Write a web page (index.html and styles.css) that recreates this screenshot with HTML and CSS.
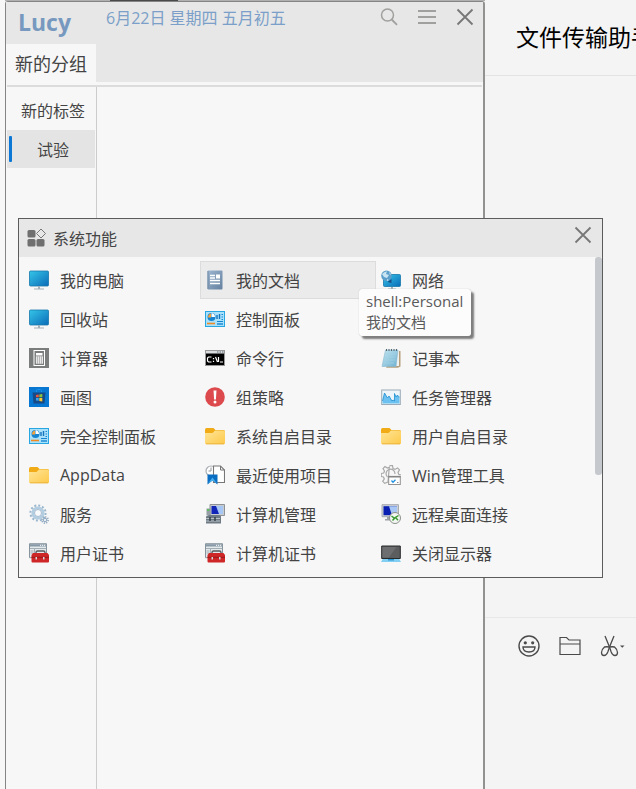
FILE: index.html
```html
<!DOCTYPE html>
<html lang="zh-CN">
<head>
  <meta charset="UTF-8">
  <meta name="viewport" content="width=device-width, initial-scale=1.0">
  <title>Lucy</title>
  <link rel="stylesheet" href="styles.css">
</head>
<body>
  <!-- 图标 -->
  <svg class="sprite" aria-hidden="true">
    <defs>
      <linearGradient id="screenBlue" x1="0" y1="0" x2="1" y2="1">
        <stop offset="0" stop-color="#35c5e8"/>
        <stop offset="1" stop-color="#0a6cb8"/>
      </linearGradient>
      <linearGradient id="folderYellow" x1="0" y1="0" x2="1" y2="1">
        <stop offset="0" stop-color="#ffe597"/>
        <stop offset="1" stop-color="#fdc94a"/>
      </linearGradient>
      <linearGradient id="docBlue" x1="0" y1="0" x2="1" y2="1">
        <stop offset="0" stop-color="#9db6d0"/>
        <stop offset="1" stop-color="#64809f"/>
      </linearGradient>
      <linearGradient id="noteBlue" x1="0" y1="0" x2="1" y2="1">
        <stop offset="0" stop-color="#c4e6f2"/>
        <stop offset="1" stop-color="#6fb1d0"/>
      </linearGradient>
    </defs>
    <symbol id="i-pc" viewBox="0 0 20 20">
      <rect x="0.5" y="1" width="19" height="15" rx="1" fill="url(#screenBlue)" stroke="#1779ab" stroke-width="0.8"/>
      <path d="M9 16h2v2.4h4v1H5v-1h4z" fill="#a3b1ba"/>
    </symbol>
    <symbol id="i-doc" viewBox="0 0 20 20">
      <rect x="2.5" y="0.5" width="15" height="19" rx="1" fill="url(#docBlue)"/>
      <path d="M3 1v18" stroke="#7089a6"/>
      <path d="M5 5.5h5M5 8h5M5 10.5h10M5 13.5h10" stroke="#fff" stroke-width="1.3"/>
      <rect x="11" y="4.5" width="4" height="4" fill="#fff"/>
    </symbol>
    <symbol id="i-net" viewBox="0 0 20 20">
      <rect x="2.500" y="4.5" width="17" height="12" rx="1" fill="url(#screenBlue)" stroke="#1779ab" stroke-width="0.8"/>
      <path d="M10 17h2v1.5h3v1H7v-1h3z" fill="#a3b1ba"/>
      <circle cx="5.5" cy="5.8" r="5.3" fill="#5c9fcb"/>
      <path d="M1 4q3-3 5-2.500L5 4l3 1-2 3-3-1zM8 2l2 2-1 1zM6 9l2 1-2 1z" fill="#c9e4f2"/>
      <path d="M6.500 12l4-3v4z" fill="#1a4e86"/>
    </symbol>
    <symbol id="i-panel" viewBox="0 0 20 20">
      <rect x="0.5" y="2.5" width="19" height="15" fill="#a9e1fb" stroke="#27a6e2"/>
      <circle cx="6.5" cy="8" r="4" fill="#1585d2"/>
      <path d="M6.5 8V4a4 4 0 0 1 3.500 4z" fill="#fff"/>
      <path d="M6 8.5v-4a4 4 0 0 0-3 4z" fill="#f3a13a"/>
      <path d="M12 10V6M14.500 10V5" stroke="#1373bd" stroke-width="1.4"/>
      <path d="M16.500 5.500h1.500M16.500 8h1.500M16.500 10.500h1.500M12 12.500h6" stroke="#1585d2"/>
      <path d="M2 14.500h8" stroke="#f08a24" stroke-width="1.6"/>
      <path d="M12 15h6" stroke="#1585d2" stroke-width="1.4"/>
    </symbol>
    <symbol id="i-calc" viewBox="0 0 20 20">
      <rect width="20" height="20" fill="#7b7d7c"/>
      <rect x="5" y="2.5" width="10.5" height="15" fill="none" stroke="#fff" stroke-width="1"/>
      <rect x="7" y="5" width="6.5" height="2.5" fill="#fff"/>
      <path d="M7.400 8.500v7M9.400 8.500v7M11.400 8.500v7M13.400 8.500v7M7 9h7M7 11h7M7 13h7M7 15h7" stroke="#fff" stroke-width="0.8"/>
    </symbol>
    <symbol id="i-cmd" viewBox="0 0 20 20">
      <rect x="0.5" y="2.5" width="19" height="15" fill="#000" stroke="#999"/>
      <path d="M1 3h18v2.500H1z" fill="#d8dcde"/>
      <path d="M12 4h1.500M14.500 4H16M17 4h1.500" stroke="#5a6670"/>
      <path d="M6.500 9h-3l-1 1v3l1 1h3M8.500 10v1.200M8.500 12.800V14M10.500 9l2 5M13.500 9v5M15 14h3" fill="none" stroke="#fff" stroke-width="1.2"/>
    </symbol>
    <symbol id="i-note" viewBox="0 0 20 20">
      <path d="M16 3h3.500v15.500L17 19.800H5z" fill="#b59f7c"/>
      <path d="M4.500 2.500H18V18H3z" fill="#eef2f2"/>
      <path d="M4.500 2H17l-2 16.500H1z" fill="url(#noteBlue)" stroke="#88b8cd" stroke-width="0.6"/>
      <path d="M5 6h10M4.500 9h10M4 12h10M3 15h10" stroke="#a4d2e4" stroke-width="0.7"/>
      <path d="M5.500 1v2M8 1v2M10.500 1v2M13 1v2M15.500 1v2" stroke="#58636a"/>
    </symbol>
    <symbol id="i-paint" viewBox="0 0 20 20">
      <rect width="20" height="20" fill="#0877d2"/>
      <path d="M7.500 5V3.500q0-1 1-1h3q1 0 1 1V5" fill="none" stroke="#1b91e8"/>
      <path d="M3.500 5.500h13l-1 11h-11z" fill="#174a86"/>
      <path d="M7 8l2.700-.4v2.700H7z" fill="#f0553a"/>
      <path d="M10.300 7.500l3-.5v3.300h-3z" fill="#87c540"/>
      <path d="M7 11h2.700v2.800L7 13.400z" fill="#33a7ed"/>
      <path d="M10.300 11h3v3.400l-3-.5z" fill="#fdc82f"/>
    </symbol>
    <symbol id="i-alert" viewBox="0 0 20 20">
      <circle cx="10" cy="10" r="9.8" fill="#dc4a4d"/>
      <path d="M8.500 3.500h3l-.6 9H9.100z" fill="#fff"/>
      <circle cx="10" cy="15" r="1.5" fill="#fff"/>
    </symbol>
    <symbol id="i-task" viewBox="0 0 20 20">
      <rect x="0.7" y="3" width="18.6" height="14.5" fill="#edf5fb" stroke="#9babb7"/>
      <path d="M1.500 14l2-8 3 5 1.500-2 3 5 1-1 1.500 1V6.500L15 10l1.500-2 1 2h1v6.500h-17z" fill="#6cc1f0"/>
      <path d="M1.500 14l2-8 3 5 1.500-2 3 5 1-1 1.500 1V6.500L15 10l1.500-2 1 2h1" fill="none" stroke="#1d8fd1" stroke-width="0.8"/>
    </symbol>
    <symbol id="i-folder" viewBox="0 0 20 20">
      <path d="M0 4q0-2 1.500-2h7l2 2h8Q20 4 20 5.500V10H0z" fill="#f0ab16"/>
      <path d="M0 7h7.500L10 4.500h8.500q1.500 0 1.500 1.500v11q0 1.200-1.500 1.200h-17Q0 18.200 0 17z" fill="url(#folderYellow)"/>
      <path d="M1 17.800h18" stroke="#e9ad32" stroke-width="0.8"/>
    </symbol>
    <symbol id="i-recent" viewBox="0 0 20 20">
      <circle cx="6" cy="6" r="5" fill="#fff" stroke="#a9afb4" stroke-width="1.2"/>
      <path d="M6 2.500V6H3.500" fill="none" stroke="#8f969c"/>
      <path d="M8.500 1h7l4 4v12.500h-11z" fill="#fff" stroke="#777" stroke-width="1.1"/>
      <path d="M15.500 1v4h4" fill="none" stroke="#777"/>
      <path d="M2.500 9.500h10v10l-5-4-5 4z" fill="#0a6fc2"/>
      <path d="M3 18.500l4.500-6 4.500 6-4.500-3z" fill="#49b0f0"/>
    </symbol>
    <symbol id="i-gear" viewBox="0 0 20 20">
      <circle cx="9" cy="9" r="7.6" fill="none" stroke="#9cb7cd" stroke-width="2" stroke-dasharray="2 1.98"/>
      <circle cx="9" cy="9" r="5.2" fill="#f7f9fb" stroke="#b3cde1" stroke-width="2.8"/>
      <circle cx="9" cy="9" r="3.5" fill="none" stroke="#8da8c0" stroke-width="0.7"/>
      <circle cx="16" cy="16" r="3.1" fill="none" stroke="#9ab0c2" stroke-width="1.8" stroke-dasharray="1.2 1.2"/>
      <circle cx="16" cy="16" r="1.8" fill="#e6eef5" stroke="#8aa5be"/>
    </symbol>
    <symbol id="i-tools" viewBox="0 0 20 20">
      <path d="M8.500 0.700h3l.5 2.800 2 .9 2.500-1.500 2 2-1.500 2.500.8 2 2 .5M7 17l-3.300 1.300-2-2L3.300 14l-.8-2-2.300-.5v-3l2.500-.5.800-2L2 3.500l2-2L6.300 3l2-.8z" fill="none" stroke="#a8a8a8" stroke-width="1.2"/>
      <path d="M6.500 12a4.500 4.500 0 1 1 7.500-3" fill="none" stroke="#a8a8a8" stroke-width="1.2"/>
      <rect x="7.700" y="11.500" width="11.6" height="8" fill="#fff" stroke="#929292"/>
      <path d="M7.500 11.700h12" stroke="#858585" stroke-width="1.6"/>
      <path d="M10.500 15.500l1.500 1.800 2.500-2.500" fill="none" stroke="#1c8fe2" stroke-width="1.3"/>
      <path d="M16 17.500h1.500" stroke="#888"/>
    </symbol>
    <symbol id="i-manage" viewBox="0 0 20 20">
      <path d="M5 0.500h14.500v11H5z" fill="#c8ccd1" stroke="#8d9297"/>
      <path d="M6.500 2H18v8H6.500z" fill="#1226b8"/>
      <path d="M11 2h7v8h-4z" fill="#a6c6f6"/>
      <path d="M8 12h8v2H8z" fill="#888f96"/>
      <path d="M1.500 4.500h4v7h-4z" fill="#979fa6"/>
      <path d="M2 6h2.500" stroke="#4fc34d" stroke-width="1.5"/>
      <path d="M1 12.500L4 11h10l2 1.500v7H1z" fill="#6f7b84"/>
      <path d="M1 14.500h14M1 17h14" stroke="#b9c1c6"/>
      <path d="M5 13v4M10 13v4" stroke="#37424a" stroke-width="1.5"/>
    </symbol>
    <symbol id="i-remote" viewBox="0 0 20 20">
      <path d="M1 0.700h16.500v12H1z" fill="#cdd1d6" stroke="#a6abb0"/>
      <path d="M2.500 2.200H16v9H2.500z" fill="#091fb2"/>
      <path d="M8 2.200h8v9h-5z" fill="#a8c7f5"/>
      <path d="M6 13h6v2h2v1.500H4V15h2z" fill="#9ba2a8"/>
      <circle cx="14" cy="14" r="5.5" fill="#f4f6f3" stroke="#8b908b"/>
      <path d="M10.500 12l3 2.300-2 2.200M17.500 11.500l-3 2 2.500 2.700" fill="none" stroke="#3b9a32" stroke-width="1.5"/>
    </symbol>
    <symbol id="i-cert" viewBox="0 0 20 20">
      <path d="M0.500 0.700h17v14h-17z" fill="#e4e9ec" stroke="#87949d"/>
      <path d="M1 1.200h16v2.300H1z" fill="#8799a6"/>
      <path d="M11 2.300h1.200M13 2.300h1.200M15 2.300h1.200" stroke="#fff"/>
      <path d="M1 5.500h16M5.500 6v8M1.500 8h3M1.500 10h3" stroke="#a2adb4"/>
      <path d="M7 11V9.500Q7 8 8.500 8h6Q16 8 16 9.500V11" fill="none" stroke="#565b5e" stroke-width="1.4"/>
      <path d="M2.500 12L4 10h14.500l1.500 2v6.500q0 1-1 1H3.500q-1 0-1-1z" fill="#cf2727"/>
      <path d="M2.500 14.300H20" stroke="#98191c"/>
      <path d="M6.500 14h1.500v2.500H6.500zM14 14h1.500v2.500H14z" fill="#d8d6d6"/>
    </symbol>
    <symbol id="i-display" viewBox="0 0 20 20">
      <path d="M2 15.500h16l2 3.500H0z" fill="#83cff4"/>
      <path d="M7 16h6v1.500H7z" fill="#2d98d2"/>
      <path d="M0.700 3h18.600v12.500H0.700z" fill="#5b5d5e" stroke="#292a2b"/>
      <path d="M1.500 4h14L8 14.500H1.500z" fill="#6c6e6f"/>
    </symbol>
    <symbol id="i-close" viewBox="0 0 20 20">
      <path d="M2.500 2.500l15 15M17.500 2.500l-15 15" stroke="currentColor" stroke-width="1.8"/>
    </symbol>
  </svg>

  <div class="desktop">
    <!-- Lucy 主窗口 -->
    <main class="launcher">
      <header class="launcher-header">
        <div class="brand">
          <h1 class="logo">Lucy</h1>
          <button class="group-tab" type="button">新的分组</button>
        </div>
        <p class="date">6月22日 星期四 五月初五</p>
        <div class="window-tools">
          <button class="tool-button" type="button" aria-label="搜索">
            <svg class="icon tool-light" viewBox="0 0 20 20"><circle cx="8.5" cy="8" r="6" fill="none" stroke="currentColor" stroke-width="1.5"/><path d="M12.700 12.500l5.300 5.300" stroke="currentColor" stroke-width="1.8"/></svg>
          </button>
          <button class="tool-button" type="button" aria-label="菜单">
            <svg class="icon tool-light" viewBox="0 0 20 20"><path d="M1 4h18M1 10h18M1 16h18" stroke="currentColor" stroke-width="2"/></svg>
          </button>
          <button class="tool-button" type="button" aria-label="关闭">
            <svg class="icon"><use href="#i-close"/></svg>
          </button>
        </div>
      </header>
      <div class="launcher-body">
        <nav class="sidebar">
          <button class="tag" type="button">新的标签</button>
          <button class="tag active" type="button">试验</button>
        </nav>
      </div>
    </main>

    <!-- 聊天窗口 -->
    <aside class="chat">
      <h2 class="chat-title">文件传输助手</h2>
      <div class="chat-messages"></div>
      <div class="chat-input">
        <button class="chat-button" type="button" aria-label="表情">
          <svg class="chat-icon" viewBox="0 0 22 22"><g fill="none" stroke="currentColor" stroke-width="1.4"><circle cx="11" cy="11" r="10"/><path d="M5 12h12q0 5-6 5t-6-5z"/></g><circle cx="7.3" cy="7.8" r="1.6" fill="currentColor"/><circle cx="14.7" cy="7.8" r="1.6" fill="currentColor"/></svg>
        </button>
        <button class="chat-button" type="button" aria-label="文件">
          <svg class="chat-icon" viewBox="0 0 22 22"><path d="M1 19.500v-17h6.500L10 5h11v14.500zM1 9h20" fill="none" stroke="currentColor" stroke-width="1.2"/></svg>
        </button>
        <button class="chat-button" type="button" aria-label="截图">
          <svg class="chat-icon cut" viewBox="0 0 25 22"><g fill="none" stroke="currentColor" stroke-width="1.3"><path d="M5 1l4.500 11 1.500 4.500q1.500 4 4 4t2.500-3-3-5.500q-2-.5-5 0"/><path d="M14 1L9.500 12 8 16.500q-1.500 4-4 4t-2.500-3 3-5.500q2-.5 5 0"/></g><path d="M20 10.500h4.500l-2.200 2.200z" fill="currentColor"/></svg>
        </button>
      </div>
    </aside>

    <!-- 系统功能窗口 -->
    <section class="dialog" role="dialog" aria-labelledby="dialogTitle">
      <header class="dialog-header">
        <svg class="icon" viewBox="0 0 20 20"><g fill="#6f6f6f"><rect x="0.500" y="2" width="8" height="7.5" rx="1.5"/><rect x="0.500" y="11" width="8" height="7.5" rx="1.5"/><rect x="9.500" y="11" width="8" height="7.5" rx="1.5"/></g><path d="M14 1l4.500 4.500L14 10 9.500 5.500z" fill="none" stroke="#777" stroke-linejoin="round"/></svg>
        <h2 class="dialog-title" id="dialogTitle">系统功能</h2>
        <button class="tool-button dialog-close" type="button" aria-label="关闭">
          <svg class="icon"><use href="#i-close"/></svg>
        </button>
      </header>
      <div class="dialog-body">
        <ul class="entries">
          <li><button class="entry" type="button"><svg class="icon"><use href="#i-pc"/></svg>我的电脑</button></li>
          <li class="has-tip">
            <button class="entry hovered" type="button" aria-describedby="tip"><svg class="icon"><use href="#i-doc"/></svg>我的文档</button>
            <div class="tooltip" id="tip" role="tooltip">shell:Personal<br>我的文档</div>
          </li>
          <li><button class="entry" type="button"><svg class="icon"><use href="#i-net"/></svg>网络</button></li>
          <li><button class="entry" type="button"><svg class="icon"><use href="#i-pc"/></svg>回收站</button></li>
          <li><button class="entry" type="button"><svg class="icon"><use href="#i-panel"/></svg>控制面板</button></li>
          <li></li>
          <li><button class="entry" type="button"><svg class="icon"><use href="#i-calc"/></svg>计算器</button></li>
          <li><button class="entry" type="button"><svg class="icon"><use href="#i-cmd"/></svg>命令行</button></li>
          <li><button class="entry" type="button"><svg class="icon"><use href="#i-note"/></svg>记事本</button></li>
          <li><button class="entry" type="button"><svg class="icon"><use href="#i-paint"/></svg>画图</button></li>
          <li><button class="entry" type="button"><svg class="icon"><use href="#i-alert"/></svg>组策略</button></li>
          <li><button class="entry" type="button"><svg class="icon"><use href="#i-task"/></svg>任务管理器</button></li>
          <li><button class="entry" type="button"><svg class="icon"><use href="#i-panel"/></svg>完全控制面板</button></li>
          <li><button class="entry" type="button"><svg class="icon"><use href="#i-folder"/></svg>系统自启目录</button></li>
          <li><button class="entry" type="button"><svg class="icon"><use href="#i-folder"/></svg>用户自启目录</button></li>
          <li><button class="entry" type="button"><svg class="icon"><use href="#i-folder"/></svg>AppData</button></li>
          <li><button class="entry" type="button"><svg class="icon"><use href="#i-recent"/></svg>最近使用项目</button></li>
          <li><button class="entry" type="button"><svg class="icon"><use href="#i-tools"/></svg>Win管理工具</button></li>
          <li><button class="entry" type="button"><svg class="icon"><use href="#i-gear"/></svg>服务</button></li>
          <li><button class="entry" type="button"><svg class="icon"><use href="#i-manage"/></svg>计算机管理</button></li>
          <li><button class="entry" type="button"><svg class="icon"><use href="#i-remote"/></svg>远程桌面连接</button></li>
          <li><button class="entry" type="button"><svg class="icon"><use href="#i-cert"/></svg>用户证书</button></li>
          <li><button class="entry" type="button"><svg class="icon"><use href="#i-cert"/></svg>计算机证书</button></li>
          <li><button class="entry" type="button"><svg class="icon"><use href="#i-display"/></svg>关闭显示器</button></li>
        </ul>
        <div class="scroll-track"><div class="scroll-thumb"></div></div>
      </div>
    </section>
  </div>
</body>
</html>
```
FILE: styles.css
```css
* {
  box-sizing: border-box;
}

body {
  margin: 0;
  font-family: "Open Sans", "Noto Sans CJK SC", sans-serif;
  font-size: 16px;
  color: #444;
  background-color: #f7f7f7;
}

h1, h2, p, ul {
  margin: 0;
  padding: 0;
}

ul {
  list-style: none;
}

button {
  border: none;
  padding: 0;
  background: none;
  font: inherit;
  color: inherit;
  cursor: pointer;
}

.sprite {
  position: absolute;
  width: 0;
  height: 0;
}

.icon {
  display: block;
  flex: none;
  width: 20px;
  height: 20px;
}

.desktop {
  position: relative;
  display: grid;
  grid-template-columns: 480fr 151fr;
  height: 100vh;
  padding-left: 5px;
  overflow: hidden;
  background: linear-gradient(to right, #b0b0b0 105px, #4a4a4a 105px, #4a4a4a 173px, #b0b0b0 173px) no-repeat 5px 0 / 100% 1px;
}

/* 主窗口 */
.launcher {
  display: flex;
  flex-direction: column;
  border: 1px solid #858585;
  border-right: 2px solid #929290;
  border-bottom: none;
  border-radius: 3px 3px 0 0;
  margin-top: 1px;
  background-color: #f7f7f7;
}

.launcher-header {
  display: flex;
  height: 80px;
  background-color: #e7e7e7;
}

.brand {
  display: flex;
  flex-direction: column;
  width: 90px;
}

.logo {
  height: 42px;
  padding-left: 12px;
  font-size: 23px;
  line-height: 40px;
  color: #7799bf;
}

.group-tab {
  flex: 1;
  background-color: #f7f7f7;
  font-size: 18px;
}

.date {
  flex: 1;
  padding-left: 10px;
  line-height: 32px;
  color: #7b9fc8;
}

.window-tools {
  display: flex;
  gap: 18px;
  height: 30px;
  padding-right: 8px;
}

.tool-button {
  color: #777;
}

.tool-light {
  color: #a0a09e;
}

.launcher-body {
  flex: 1;
  display: flex;
  border-top: 2px solid #dcdcdc;
  margin: 3px 1px 0;
}

.sidebar {
  display: flex;
  flex-direction: column;
  gap: 1px;
  width: 90px;
  padding: 4px 1px 0 0;
  border-right: 1px solid #ccc;
}

.tag {
  position: relative;
  height: 38px;
  padding-left: 4px;
}

.tag.active {
  background-color: #e4e4e4;
}

.tag.active::before {
  content: "";
  position: absolute;
  top: 6px;
  bottom: 6px;
  left: 2px;
  width: 3px;
  border-radius: 1px;
  background-color: #0a78d4;
}

/* 聊天窗口 */
.chat {
  display: flex;
  flex-direction: column;
  min-width: 0;
  background-color: #f4f4f4;
  overflow: hidden;
}

.chat-title {
  height: 76px;
  padding-left: 31px;
  border-bottom: 1px solid #e3e3e3;
  font-size: 23px;
  font-weight: 400;
  line-height: 74px;
  white-space: nowrap;
  color: #000;
}

.chat-messages {
  flex: 1;
}

.chat-input {
  display: flex;
  align-items: flex-start;
  gap: 19px;
  height: 172px;
  padding: 17px 0 0 33px;
  border-top: 1px solid #e8e8e8;
}

.chat-button {
  flex: none;
  color: #4a4a4a;
}

.chat-icon {
  display: block;
  width: 22px;
  height: 22px;
}

.chat-icon.cut {
  width: 25px;
}

/* 系统功能窗口 */
.dialog {
  position: absolute;
  top: 218px;
  left: 18px;
  right: 33px;
  border: 1px solid #5c5c5c;
  background-color: #f7f7f7;
}

.dialog-header {
  display: flex;
  align-items: center;
  gap: 6px;
  height: 38px;
  padding: 0 9px 0 8px;
  background-color: #e7e7e7;
}

.dialog-title {
  flex: 1;
  font-size: 16px;
  font-weight: 400;
}

.dialog-close {
  align-self: flex-start;
  padding-top: 6px;
}

.dialog-body {
  display: flex;
}

.entries {
  flex: 1;
  display: grid;
  grid-template-columns: repeat(3, 1fr);
  grid-auto-rows: 39px;
  padding: 4px 43px 4px 5px;
}

.has-tip {
  position: relative;
}

.entry {
  display: flex;
  align-items: center;
  gap: 11px;
  width: 100%;
  height: 38px;
  padding: 0 4px;
  border: 1px solid transparent;
  white-space: nowrap;
}

.entry.hovered {
  border-color: #dcdcdc;
  background-color: #ebebeb;
}

.tooltip {
  position: absolute;
  top: 28px;
  left: 159px;
  z-index: 1;
  padding: 2px 8px 3px 7px;
  border-radius: 3px;
  background-color: #fcfcfc;
  box-shadow: 0 0 1px #aaa, 3px 3px 2px rgba(0, 0, 0, 0.5);
  font-size: 15px;
  line-height: 21px;
  white-space: nowrap;
  color: #5a5a5a;
}

.scroll-track {
  width: 7px;
}

.scroll-thumb {
  height: 68%;
  border-radius: 3px;
  background-color: #c5c9ce;
}
```
